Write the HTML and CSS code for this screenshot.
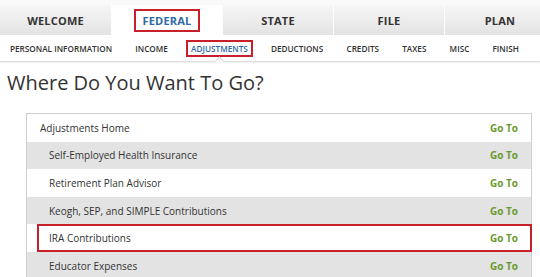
FILE: index.html
```html
<!DOCTYPE html>
<html>
<head>
<meta charset="utf-8">
<title>Where Do You Want To Go?</title>
<link rel="stylesheet" href="styles.css">
</head>
<body>

<div class="tabs">
  <div class="tab">WELCOME</div>
  <div class="tab active"><span class="tab-label">FEDERAL</span></div>
  <div class="tab">STATE</div>
  <div class="tab">FILE</div>
  <div class="tab">PLAN</div>
</div>

<div class="subnav">
  <div class="sub-item">Personal Information</div>
  <div class="sub-item">Income</div>
  <div class="sub-item active"><span class="sub-label">Adjustments</span></div>
  <div class="sub-item">Deductions</div>
  <div class="sub-item">Credits</div>
  <div class="sub-item">Taxes</div>
  <div class="sub-item">Misc</div>
  <div class="sub-item">Finish</div>
</div>

<h1 class="title">Where Do You Want To Go?</h1>

<div class="list">
  <div class="row">
    <span>Adjustments Home</span><a class="goto">Go To</a>
  </div>
  <div class="row sub shade">
    <span>Self-Employed Health Insurance</span><a class="goto">Go To</a>
  </div>
  <div class="row sub">
    <span>Retirement Plan Advisor</span><a class="goto">Go To</a>
  </div>
  <div class="row sub shade">
    <span>Keogh, SEP, and SIMPLE Contributions</span><a class="goto">Go To</a>
  </div>
  <div class="row sub picked">
    <span>IRA Contributions</span><a class="goto">Go To</a>
  </div>
  <div class="row sub shade">
    <span>Educator Expenses</span><a class="goto">Go To</a>
  </div>
</div>

</body>
</html>
```

FILE: styles.css
```css
body {
	margin: 0;
	background-color: #fff;
	font-family: "Open Sans", "DejaVu Sans", sans-serif;
	color: #333;
	overflow: hidden;
}

/* top tabs */
.tabs {
	display: grid;
	grid-template-columns: repeat(5, 111px);
	width: 540px;
	height: 30px;
	padding-top: 5px;
	background: linear-gradient(#fafafa, #f2f2f2);
	overflow: hidden;
}
.tab {
	display: flex;
	align-items: center;
	justify-content: center;
	background: linear-gradient(#f6f6f6, #e3e3e3);
	border-left: 1px solid #fdfdfd;
	font-size: 11px;
	font-weight: 700;
	letter-spacing: 0.2px;
	color: #333;
}
.tab:first-child {
	border-left: none;
}
.tab.active {
	background: #fff;
	color: #2f6aa8;
}
.tab-label {
	padding: 2px 7px;
	border: 2px solid #c8202a;
}

/* second row */
.subnav {
	display: flex;
	justify-content: space-between;
	height: 26px;
	padding: 0 21px 0 10px;
	border-bottom: 1px solid #dcdcdc;
	box-shadow: 0 1px 2px #eee;
}
.sub-item {
	position: relative;
	display: flex;
	align-items: center;
	font-size: 8.2px;
	font-weight: 600;
	text-transform: uppercase;
	color: #333;
}
.sub-item.active {
	color: #2f6aa8;
}
.sub-label {
	padding: 1px 3px;
	margin: 0 -5px;
	border: 2px solid #c8202a;
}
.sub-item.active::after {
	content: "";
	position: absolute;
	left: 50%;
	bottom: -4px;
	width: 6px;
	height: 6px;
	margin-left: -3px;
	background: #fff;
	border-left: 1px solid #dcdcdc;
	border-top: 1px solid #dcdcdc;
	transform: rotate(45deg);
}

.title {
	margin: 5px 0 0 7px;
	font-size: 20px;
	font-weight: 400;
	line-height: 32px;
	color: #333;
}

/* list of places */
.list {
	margin: 14px 8px 0 26px;
	border: 1px solid #cfcfcf;
	border-bottom: none;
}
.row {
	box-sizing: border-box;
	display: flex;
	align-items: center;
	justify-content: space-between;
	height: 27.6px;
	padding: 0 13px 0 13px;
	font-size: 10px;
	color: #333;
}
.row.sub {
	padding-left: 22px;
}
.row.shade {
	background-color: #e3e3e3;
}
.row.picked {
	margin: 0 -1px 0 10px;
	padding-left: 10px;
	padding-right: 12px;
	border: 2px solid #c8202a;
}
.goto {
	font-weight: 700;
	color: #6b9a2e;
}
```
